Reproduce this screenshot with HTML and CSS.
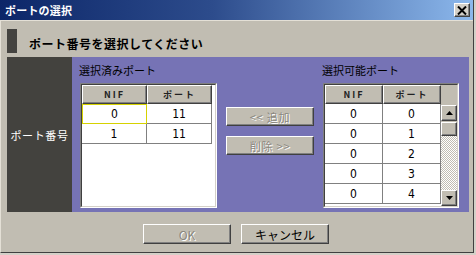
FILE: index.html
```html
<!DOCTYPE html>
<html lang="ja">
<head>
    <meta charset="UTF-8">
    <title>ポートの選択</title>
    <link rel="stylesheet" href="styles.css">
</head>
<body>
    <div class="window">
        <div class="titlebar">
            <span class="title">ポートの選択</span>
            <button class="close">
                <svg width="10" height="9" viewBox="0 0 10 9"><path d="M1 0.5 L9 8.5 M9 0.5 L1 8.5" stroke="#000" stroke-width="2"/></svg>
            </button>
        </div>

        <div class="heading">
            <span class="marker"></span>
            <h1>ポート番号を選択してください</h1>
        </div>

        <div class="panel">
            <div class="panel-label">ポート番号</div>
            <div class="panel-main">
                <div class="group group-left">
                    <div class="group-title">選択済みポート</div>
                    <div class="list">
                        <div class="list-inner">
                            <div class="cols">
                                <div class="head">NIF</div>
                                <div class="head">ポート</div>
                                <div class="cell focus">0</div>
                                <div class="cell">11</div>
                                <div class="cell">1</div>
                                <div class="cell">11</div>
                            </div>
                        </div>
                    </div>
                </div>

                <div class="move-buttons">
                    <button class="btn disabled">&lt;&lt; 追加</button>
                    <button class="btn disabled">削除 &gt;&gt;</button>
                </div>

                <div class="group group-right">
                    <div class="group-title">選択可能ポート</div>
                    <div class="list">
                        <div class="list-inner with-scroll">
                            <div class="cols narrow">
                                <div class="head">NIF</div>
                                <div class="head">ポート</div>
                                <div class="cell">0</div>
                                <div class="cell">0</div>
                                <div class="cell">0</div>
                                <div class="cell">1</div>
                                <div class="cell">0</div>
                                <div class="cell">2</div>
                                <div class="cell">0</div>
                                <div class="cell">3</div>
                                <div class="cell">0</div>
                                <div class="cell">4</div>
                            </div>
                            <div class="scrollbar">
                                <div class="scroll-head"></div>
                                <div class="scroll-btn">
                                    <svg width="7" height="4" viewBox="0 0 7 4"><path d="M3.5 0 L7 4 L0 4 Z" fill="#000"/></svg>
                                </div>
                                <div class="scroll-thumb"></div>
                                <div class="scroll-track"></div>
                                <div class="scroll-btn">
                                    <svg width="7" height="4" viewBox="0 0 7 4"><path d="M0 0 L7 0 L3.5 4 Z" fill="#000"/></svg>
                                </div>
                            </div>
                        </div>
                    </div>
                </div>
            </div>
        </div>

        <div class="footer">
            <button class="btn wide disabled">OK</button>
            <button class="btn wide">キャンセル</button>
        </div>
    </div>
</body>
</html>
```

FILE: styles.css
```css
body {
    margin: 0;
    padding: 0;
    background-color: #d4d0c8;
    font-family: "Noto Sans CJK JP", "Liberation Sans", sans-serif;
}

.window {
    width: 474px;
    height: 253px;
    box-sizing: border-box;
    background-color: #c1bdb2;
    border-right: 1px solid #404040;
    border-bottom: 1px solid #404040;
    border-left: 1px solid #e4e0d6;
}

.titlebar {
    height: 20px;
    margin-left: -1px;
    display: flex;
    align-items: center;
    justify-content: space-between;
    padding: 0 3px 0 5px;
    background: linear-gradient(to right, #0c2668, #2d4c8c 45%, #8cb8ec);
    border-bottom: 1px solid #e4e0d6;
}

.title {
    color: #fff;
    font-size: 11px;
    font-weight: bold;
    letter-spacing: 0.2px;
}

.close {
    width: 16px;
    height: 14px;
    padding: 0;
    display: flex;
    align-items: center;
    justify-content: center;
    background-color: #d4d0c8;
    border: 1px solid;
    border-color: #fff #404040 #404040 #fff;
    box-shadow: inset -1px -1px #808080;
}

.heading {
    display: flex;
    align-items: center;
    margin: 8px 0 0 6px;
    height: 24px;
}

.marker {
    width: 10px;
    height: 24px;
    background-color: #444340;
}

.heading h1 {
    margin: 4px 0 0 12px;
    font-size: 12px;
    font-weight: bold;
    letter-spacing: 0.5px;
    color: #000;
}

.panel {
    display: flex;
    margin: 4px 0 0 6px;
    width: 462px;
    height: 155px;
}

.panel-label {
    width: 65px;
    display: flex;
    align-items: center;
    justify-content: center;
    background-color: #43423e;
    color: #fff;
    font-size: 11px;
    letter-spacing: 0.6px;
}

.panel-main {
    flex: 1;
    display: flex;
    padding: 3px 10px 4px 8px;
    background-color: #7673b5;
}

.group {
    display: flex;
    flex-direction: column;
}

.group-left {
    width: 137px;
}

.group-right {
    width: 136px;
}

.group-title {
    height: 20px;
    line-height: 20px;
    margin: 0 0 3px -1px;
    font-size: 11px;
    color: #000;
}

.list {
    flex: 1;
    border: 1px solid;
    border-color: #808080 #fff #fff #808080;
}

.list-inner {
    height: 100%;
    box-sizing: border-box;
    background-color: #fff;
    border: 1px solid;
    border-color: #404040 #d4d0c8 #d4d0c8 #404040;
}

.with-scroll {
    display: flex;
}

.cols {
    display: grid;
    grid-template-columns: 65px 65px;
    grid-auto-rows: 20px;
    grid-template-rows: 19px;
    align-content: start;
}

.cols.narrow {
    grid-template-columns: 58px 58px;
}

.head {
    display: flex;
    align-items: center;
    justify-content: center;
    background-color: #c1bdb2;
    border: 1px solid;
    border-color: #fff #404040 #404040 #fff;
    box-shadow: inset -1px -1px #808080;
    font-size: 9px;
    font-weight: bold;
    letter-spacing: 2px;
    color: #222;
}

.cell {
    display: flex;
    align-items: center;
    justify-content: center;
    border-right: 1px solid #808080;
    border-bottom: 1px solid #808080;
    font-family: "DejaVu Sans Condensed", "Liberation Sans", sans-serif;
    font-size: 12px;
    color: #000;
}

.cell.focus {
    border: 1px solid #d6d200;
}

.move-buttons {
    display: flex;
    flex-direction: column;
    gap: 10px;
    margin: 47px 9px 0 9px;
}

.btn {
    width: 88px;
    height: 19px;
    padding: 0;
    background-color: #c1bdb2;
    border: 1px solid;
    border-color: #fff #404040 #404040 #fff;
    box-shadow: inset -1px -1px #808080;
    font-family: "Noto Sans CJK JP", "Liberation Sans", sans-serif;
    font-size: 11px;
    letter-spacing: 0.8px;
    color: #000;
}

.btn.disabled {
    color: #8a877e;
    text-shadow: 1px 1px #fff;
}

.scrollbar {
    width: 16px;
    display: flex;
    flex-direction: column;
    background-color: #c1bdb2;
}

.scroll-head {
    height: 20px;
}

.scroll-btn,
.scroll-thumb {
    height: 16px;
    box-sizing: border-box;
    display: flex;
    align-items: center;
    justify-content: center;
    background-color: #c1bdb2;
    border: 1px solid;
    border-color: #fff #404040 #404040 #fff;
    box-shadow: inset -1px -1px #808080;
}

.scroll-thumb {
    height: 14px;
    margin-top: 1px;
}

.scroll-track {
    flex: 1;
    background: repeating-conic-gradient(#c1bdb2 0 25%, #fff 0 50%) 0 0 / 2px 2px;
}

.footer {
    display: flex;
    justify-content: center;
    gap: 10px;
    margin-top: 12px;
    padding-right: 2px;
}

.btn.wide {
    height: 20px;
    font-size: 12px;
    letter-spacing: 0;
}
```
